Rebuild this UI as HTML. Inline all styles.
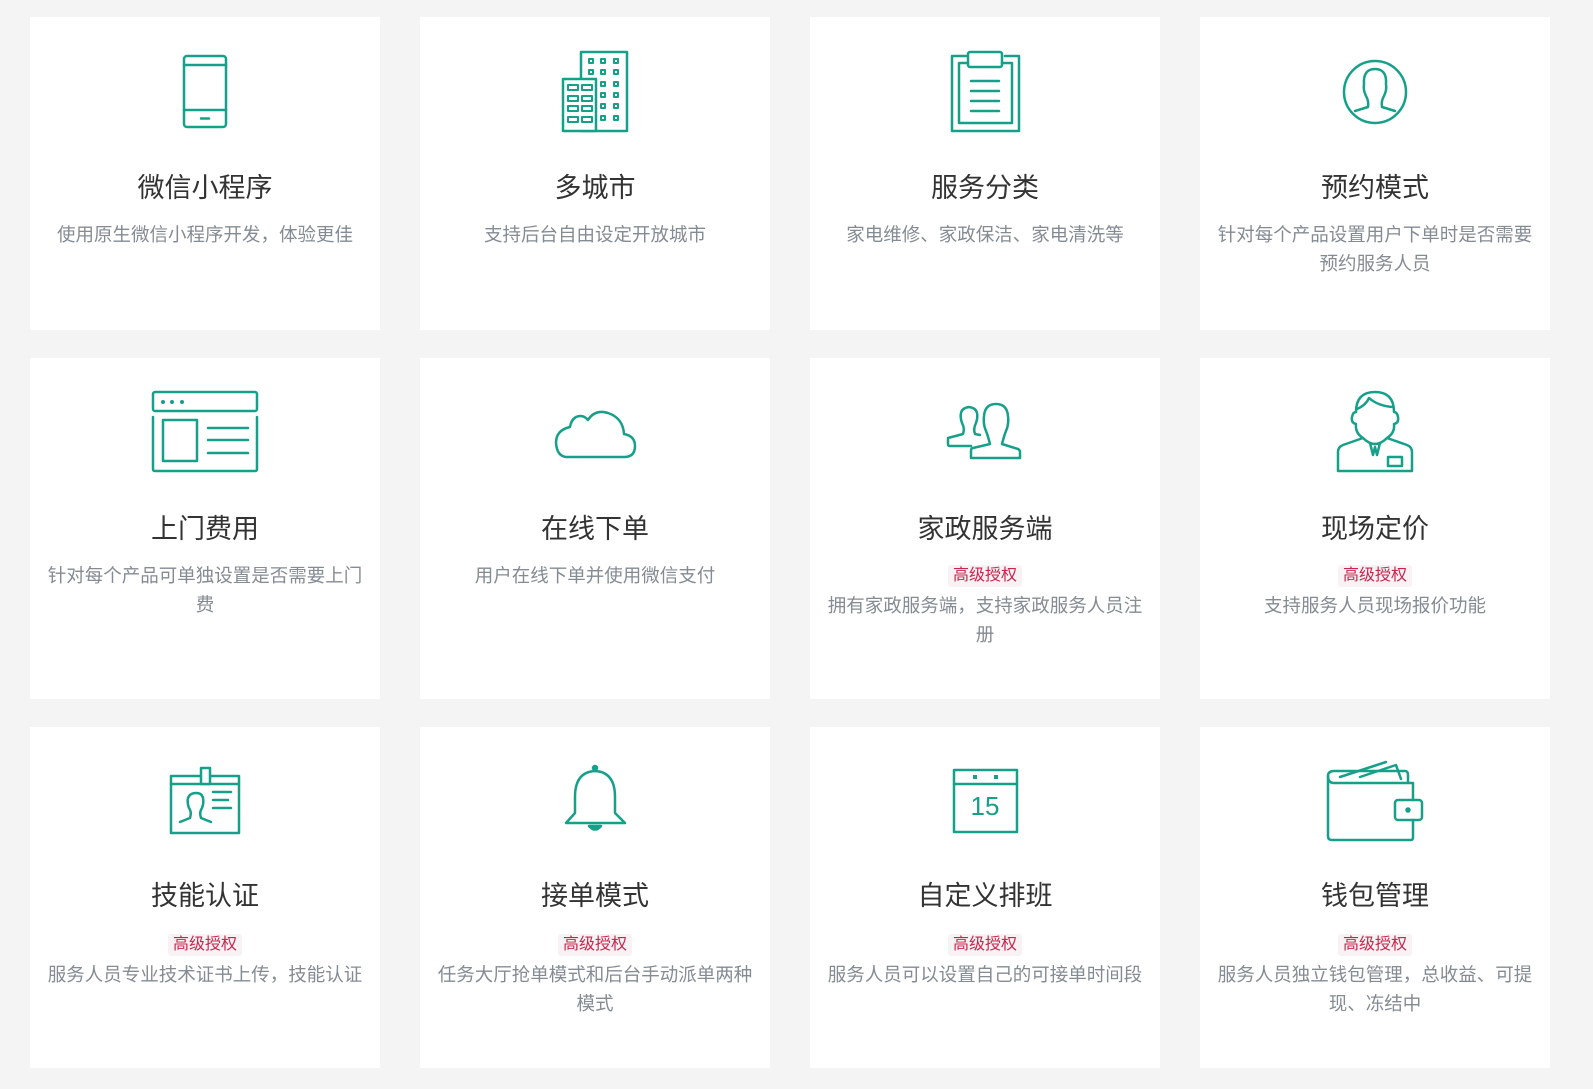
<!DOCTYPE html>
<html><head><meta charset="utf-8"><style>
*{margin:0;padding:0;box-sizing:border-box}
html,body{width:1593px;height:1089px;background:#f4f4f4;overflow:hidden;font-family:"Liberation Sans","Noto Sans CJK SC",sans-serif}
.card{position:absolute;width:350px;background:#fff;text-align:center;padding:0 14px}
.t{position:absolute;left:0;right:0;font-size:27px;color:#333;line-height:40px}
.d{position:absolute;left:12px;right:12px;font-size:18.5px;color:#858b93;line-height:29px}
.b{display:inline-block;background:#f9f2f4;color:#c7254e;font-size:16px;line-height:22px;padding:0 5px;border-radius:3px;margin-bottom:4px}
svg{position:absolute;left:0;top:0}
</style></head><body>
<div class="card" style="left:30px;top:17px;height:313px"><div class="t" style="top:151px">微信小程序</div><div class="d" style="top:203px">使用原生微信小程序开发，体验更佳</div></div>
<div class="card" style="left:420px;top:17px;height:313px"><div class="t" style="top:151px">多城市</div><div class="d" style="top:203px">支持后台自由设定开放城市</div></div>
<div class="card" style="left:810px;top:17px;height:313px"><div class="t" style="top:151px">服务分类</div><div class="d" style="top:203px">家电维修、家政保洁、家电清洗等</div></div>
<div class="card" style="left:1200px;top:17px;height:313px"><div class="t" style="top:151px">预约模式</div><div class="d" style="top:203px">针对每个产品设置用户下单时是否需要预约服务人员</div></div>

<div class="card" style="left:30px;top:358px;height:341px"><div class="t" style="top:151px">上门费用</div><div class="d" style="top:203px">针对每个产品可单独设置是否需要上门费</div></div>
<div class="card" style="left:420px;top:358px;height:341px"><div class="t" style="top:151px">在线下单</div><div class="d" style="top:203px">用户在线下单并使用微信支付</div></div>
<div class="card" style="left:810px;top:358px;height:341px"><div class="t" style="top:151px">家政服务端</div><div class="d" style="top:201px"><span class="b">高级授权</span><br>拥有家政服务端，支持家政服务人员注册</div></div>
<div class="card" style="left:1200px;top:358px;height:341px"><div class="t" style="top:151px">现场定价</div><div class="d" style="top:201px"><span class="b">高级授权</span><br>支持服务人员现场报价功能</div></div>

<div class="card" style="left:30px;top:727px;height:341px"><div class="t" style="top:149px">技能认证</div><div class="d" style="top:201px"><span class="b">高级授权</span><br>服务人员专业技术证书上传，技能认证</div></div>
<div class="card" style="left:420px;top:727px;height:341px"><div class="t" style="top:149px">接单模式</div><div class="d" style="top:201px"><span class="b">高级授权</span><br>任务大厅抢单模式和后台手动派单两种模式</div></div>
<div class="card" style="left:810px;top:727px;height:341px"><div class="t" style="top:149px">自定义排班</div><div class="d" style="top:201px"><span class="b">高级授权</span><br>服务人员可以设置自己的可接单时间段</div></div>
<div class="card" style="left:1200px;top:727px;height:341px"><div class="t" style="top:149px">钱包管理</div><div class="d" style="top:201px"><span class="b">高级授权</span><br>服务人员独立钱包管理，总收益、可提现、冻结中</div></div>

<svg width="1593" height="1089" viewBox="0 0 1593 1089" fill="none" stroke="#16a08a" stroke-width="2.5" stroke-linejoin="round" stroke-linecap="round">
<rect x="184" y="56" width="42" height="71" rx="3"/><line x1="184" y1="65" x2="226" y2="65"/><line x1="184" y1="110" x2="226" y2="110"/><line x1="201" y1="118.5" x2="209" y2="118.5"/>
<rect x="581" y="52" width="46" height="79"/><rect x="563" y="79" width="33" height="52" fill="#fff"/>
<g stroke-width="2"><rect x="589" y="59" width="4" height="4"/><rect x="601" y="59" width="4" height="4"/><rect x="614" y="59" width="4" height="4"/>
<rect x="589" y="70" width="4" height="4"/><rect x="601" y="70" width="4" height="4"/><rect x="614" y="70" width="4" height="4"/>
<rect x="601" y="82" width="4" height="4"/><rect x="614" y="82" width="4" height="4"/><rect x="601" y="93" width="4" height="4"/><rect x="614" y="93" width="4" height="4"/>
<rect x="601" y="104" width="4" height="4"/><rect x="614" y="104" width="4" height="4"/><rect x="601" y="116" width="4" height="4"/><rect x="614" y="116" width="4" height="4"/>
<rect x="568" y="85" width="10" height="5"/><rect x="582" y="85" width="10" height="5"/><rect x="568" y="96" width="10" height="5"/><rect x="582" y="96" width="10" height="5"/>
<rect x="568" y="106" width="10" height="5"/><rect x="582" y="106" width="10" height="5"/><rect x="568" y="117" width="10" height="5"/><rect x="582" y="117" width="10" height="5"/></g>
<path d="M966 56H952V131H1019V56H1005"/><path d="M968 63H959V123H1012V63H1002"/><rect x="968" y="52" width="34" height="15" rx="2"/>
<line x1="971" y1="81" x2="999" y2="81"/><line x1="971" y1="91" x2="999" y2="91"/><line x1="971" y1="101" x2="999" y2="101"/><line x1="971" y1="111" x2="999" y2="111"/>
<circle cx="1375" cy="92" r="31"/><path d="M1355 111L1368 107Q1369 101 1366 96Q1363 90 1364 84Q1363 69 1375 69Q1387 69 1386 84Q1387 90 1384 96Q1381 101 1382 107L1395 111"/>
<rect x="153" y="392" width="104" height="19" rx="2"/><path d="M153 417V469Q153 471 155 471H255Q257 471 257 469V417"/>
<g fill="#16a08a" stroke="none"><circle cx="163" cy="402" r="2"/><circle cx="172" cy="402" r="2"/><circle cx="182" cy="402" r="2"/></g>
<rect x="163" y="420" width="34" height="41"/><line x1="208" y1="428" x2="248" y2="428"/><line x1="208" y1="440" x2="248" y2="440"/><line x1="208" y1="453" x2="248" y2="453"/>
<path d="M566 457H624Q635 457 635 446Q635 436 624 434Q623 418 608 413Q595 409 588 420Q583 414 576 417Q571 420 570 427Q556 430 556 443Q557 456 566 457Z"/>
<path d="M971 446H950Q948 446 948 444V438L963 434Q965 428 962 423Q960 417 961 413Q962 408 969 407Q976 408 977 413Q978 417 976 423Q973 429 975 434L980 435"/>
<path d="M971 458V451Q971 448 973 448L990 444Q988 436 986 431Q983 424 984 416Q985 404 996 404Q1007 404 1008 416Q1009 424 1006 431Q1004 436 1002 444L1018 449Q1020 450 1020 452V458Z"/>
<path d="M1338 471V452Q1338 447 1343 445L1363 438Q1355 433 1356 424Q1351 423 1352 417Q1353 412 1356 412Q1356 392 1375 392Q1394 392 1394 412Q1397 412 1398 417Q1399 423 1394 424Q1395 433 1387 438L1407 445Q1412 447 1412 452V471Z"/>
<path d="M1357 409Q1366 405 1369 398Q1378 406 1393 407"/><path d="M1363 438Q1375 450 1387 438"/><path d="M1370 443L1373 455L1375 447L1377 455L1380 443"/><rect x="1388" y="457" width="14" height="9"/>
<rect x="171" y="776" width="68" height="57"/><line x1="171" y1="784" x2="239" y2="784"/><rect x="201" y="768" width="9" height="16" fill="#fff"/>
<path d="M180 822L190 818Q192 812 189 808Q187 803 188 798Q190 793 196 793Q202 793 203 798Q204 803 202 808Q199 812 201 818L211 822"/>
<line x1="213" y1="792" x2="231" y2="792"/><line x1="213" y1="800" x2="228" y2="800"/><line x1="213" y1="808" x2="231" y2="808"/>
<path d="M566 823H625L615 813V797Q615 772 595 771Q575 772 575 797V813Z"/><circle cx="595" cy="768" r="2" fill="#16a08a"/><path d="M589 826Q595 833 601 826Z" fill="#16a08a"/>
<rect x="954" y="770" width="63" height="62"/><line x1="954" y1="784" x2="1017" y2="784"/>
<g fill="#16a08a" stroke="none"><rect x="973" y="775" width="4" height="4"/><rect x="994" y="775" width="4" height="4"/></g>
<text x="985" y="815" stroke="none" fill="#16a08a" font-family="Liberation Sans,sans-serif" font-size="26" text-anchor="middle">15</text>
<path d="M1413 800V783H1334Q1328 783 1328 776Q1328 771 1334 771H1405Q1408 771 1408 775V781"/><path d="M1328 776V836Q1328 840 1332 840H1411Q1413 840 1413 837V820"/>
<rect x="1395" y="800" width="27" height="20" rx="3"/><circle cx="1408" cy="810" r="1.5" fill="#16a08a"/>
<path d="M1340 777L1386 762"/><path d="M1360 777L1396 765L1401 779"/>
</svg>
</body></html>
